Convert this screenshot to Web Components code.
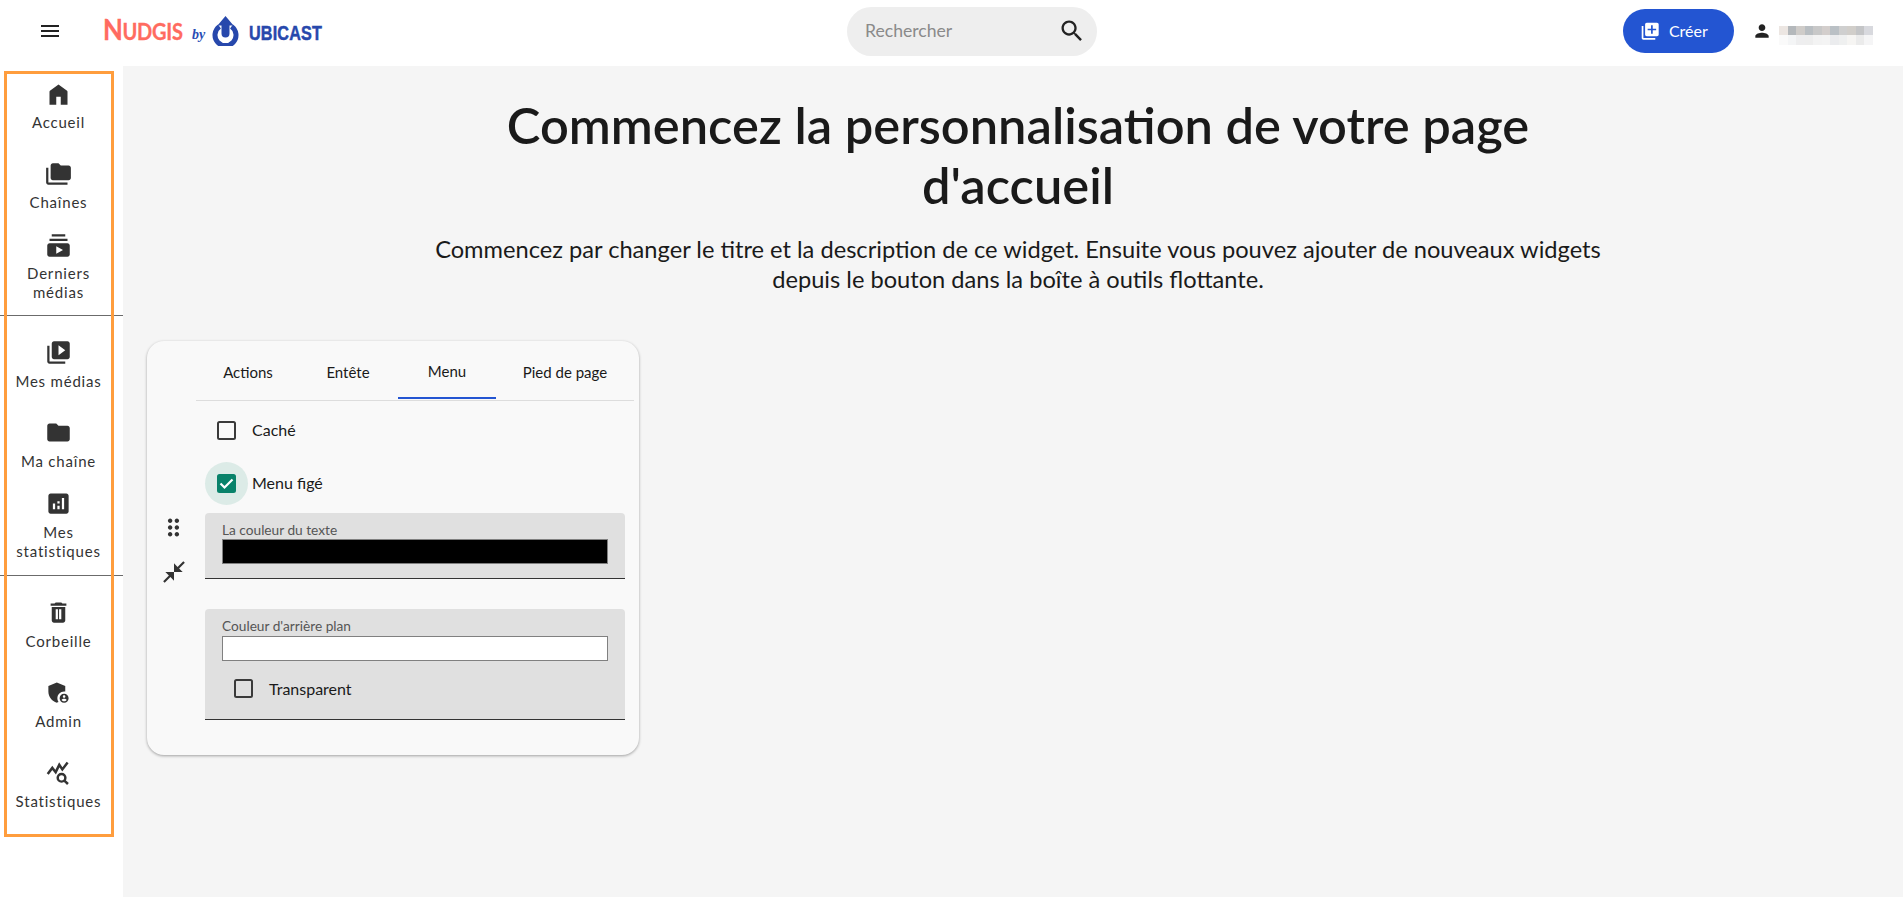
<!DOCTYPE html>
<html lang="fr"><head><meta charset="utf-8"><title>Nudgis</title>
<style>
html,body{margin:0;height:897px;overflow:hidden;background:#fff;font-family:Lato,"Noto Sans",sans-serif;color:#1a1a1a}
app-shell{display:grid}
</style></head>
<body>
<app-shell>
  <app-header slot="header"></app-header>
  <side-nav slot="nav">
    <nav-section pad="6" end="0" lab="5">
      <nav-item icon="home">Accueil</nav-item>
      <nav-item icon="folder_copy">Chaînes</nav-item>
      <nav-item icon="subscriptions" tall>Derniers<br>médias</nav-item>
    </nav-section>
    <nav-section pad="14" end="2" lab="6" rule>
      <nav-item icon="video_library">Mes médias</nav-item>
      <nav-item icon="folder">Ma chaîne</nav-item>
      <nav-item icon="analytics" tall>Mes<br>statistiques</nav-item>
    </nav-section>
    <nav-section pad="14" end="0" lab="6" rule>
      <nav-item icon="delete">Corbeille</nav-item>
      <nav-item icon="admin">Admin</nav-item>
      <nav-item icon="query_stats">Statistiques</nav-item>
    </nav-section>
  </side-nav>
  <page-main slot="main">
    <hero-block slot="hero">
      <span slot="title">Commencez la personnalisation de votre page d'accueil</span>
      <span slot="text">Commencez par changer le titre et la description de ce widget. Ensuite vous pouvez ajouter de nouveaux widgets depuis le bouton dans la boîte à outils flottante.</span>
    </hero-block>
    <settings-card slot="card"></settings-card>
  </page-main>
</app-shell>
<script>
const P={
menu:'M3 18h18v-2H3v2zm0-5h18v-2H3v2zm0-7v2h18V6H3z',
search:'M15.5 14h-.79l-.28-.27C15.41 12.59 16 11.11 16 9.5 16 5.91 13.09 3 9.5 3S3 5.91 3 9.5 5.91 16 9.5 16c1.61 0 3.09-.59 4.23-1.57l.27.28v.79l5 4.99L20.49 19l-4.99-5zm-6 0C7.01 14 5 11.99 5 9.5S7.01 5 9.5 5 14 7.01 14 9.5 11.99 14 9.5 14z',
library_add:'M4 6H2v14c0 1.1.9 2 2 2h14v-2H4V6zm16-4H8c-1.1 0-2 .9-2 2v12c0 1.1.9 2 2 2h12c1.1 0 2-.9 2-2V4c0-1.1-.9-2-2-2zm-1 9h-4v4h-2v-4H9V9h4V5h2v4h4v2z',
person:'M12 12c2.21 0 4-1.79 4-4s-1.79-4-4-4-4 1.79-4 4 1.79 4 4 4zm0 2c-2.67 0-8 1.34-8 4v2h16v-2c0-2.66-5.33-4-8-4z',
home:'M4 21V9.5c0-.3.1-.6.4-.8L12 3l7.6 5.7c.3.2.4.5.4.8V21h-6v-7h-4v7z',
folder_copy:'M3 19h17v2H3c-1.1 0-2-.9-2-2V6h2v13zM23 6v9c0 1.1-.9 2-2 2H7c-1.1 0-2-.9-2-2l.01-11c0-1.1.89-2 1.99-2h5l2 2h7c1.1 0 2 .9 2 2z',
subscriptions:'M20 8H4V6h16v2zm-2-6H6v2h12V2zm4 10v8c0 1.1-.9 2-2 2H4c-1.1 0-2-.9-2-2v-8c0-1.1.9-2 2-2h16c1.1 0 2 .9 2 2zm-6 4-6-3.27v6.53L16 16z',
video_library:'M4 6H2v14c0 1.1.9 2 2 2h14v-2H4V6zm16-4H8c-1.1 0-2 .9-2 2v12c0 1.1.9 2 2 2h12c1.1 0 2-.9 2-2V4c0-1.1-.9-2-2-2zm-8 12.5v-9l6 4.5-6 4.5z',
folder:'M10 4H4c-1.1 0-1.99.9-1.99 2L2 18c0 1.1.9 2 2 2h16c1.1 0 2-.9 2-2V8c0-1.1-.9-2-2-2h-8l-2-2z',
analytics:'M19 3H5c-1.1 0-2 .9-2 2v14c0 1.1.9 2 2 2h14c1.1 0 2-.9 2-2V5c0-1.1-.9-2-2-2zM9 17H7v-5h2v5zm4 0h-2v-3h2v3zm0-5h-2v-2h2v2zm4 5h-2V7h2v10z',
delete:'M6 19c0 1.1.9 2 2 2h8c1.1 0 2-.9 2-2V7H6v12zM9.5 9h2v9h-2zm3 0h2v9h-2zM19 4h-3.5l-1-1h-5l-1 1H5v2h14V4z',
admin:'M17 11c.34 0 .67.04 1 .09V6.27L10.5 3 3 6.27v4.91c0 4.54 3.2 8.79 7.5 9.82.55-.13 1.08-.32 1.6-.55-.69-.98-1.1-2.17-1.1-3.45 0-3.31 2.69-6 6-6zM17 13c-2.21 0-4 1.79-4 4s1.79 4 4 4 4-1.79 4-4-1.79-4-4-4zm0 1.38c.62 0 1.12.51 1.12 1.12s-.51 1.12-1.12 1.12-1.12-.51-1.12-1.12.5-1.12 1.12-1.12zm0 5.37c-.93 0-1.74-.46-2.24-1.17.05-.72 1.51-1.08 2.24-1.08s2.19.36 2.24 1.08c-.5.71-1.31 1.17-2.24 1.17z',
query_stats:'<g fill="none" stroke="currentColor" stroke-width="2.2"><path d="M2.4 13.4L6.5 7.9l3 3.8 3.2-6.5 2.7 4.1 4.7-6.2"/><circle cx="14.7" cy="16.7" r="3.4"/><path d="M17.2 19.2l3.2 3"/></g>',
drag:'M11 18c0 1.1-.9 2-2 2s-2-.9-2-2 .9-2 2-2 2 .9 2 2zm-2-8c-1.1 0-2 .9-2 2s.9 2 2 2 2-.9 2-2-.9-2-2-2zm0-6c-1.1 0-2 .9-2 2s.9 2 2 2 2-.9 2-2-.9-2-2-2zm6 4c1.1 0 2-.9 2-2s-.9-2-2-2-2 .9-2 2 .9 2 2 2zm0 2c-1.1 0-2 .9-2 2s.9 2 2 2 2-.9 2-2-.9-2-2-2zm0 6c-1.1 0-2 .9-2 2s.9 2 2 2 2-.9 2-2-.9-2-2-2z',
compress:'M22 3.41l-5.29 5.29L20 12h-8V4l3.29 3.29L20.59 2 22 3.41zM3.41 22l5.29-5.29L12 20v-8H4l3.29 3.29L2 20.59 3.41 22z'
};
function el(name,css,html){
  customElements.define(name,class extends HTMLElement{
    constructor(){super();this.attachShadow({mode:'open'}).innerHTML=`<style>${css}</style>${html}`;}
  });
}
customElements.define('m-icon',class extends HTMLElement{
  connectedCallback(){
    if(this.shadowRoot)return;
    const s=this.getAttribute('size')||24,d=P[this.getAttribute('name')];
    this.attachShadow({mode:'open'}).innerHTML=`<style>:host{display:block;width:${s}px;height:${s}px;flex:none;color:inherit}svg{display:block;width:100%;height:100%;fill:currentColor}</style><svg viewBox="0 0 24 24">${d[0]==='<'?d:`<path fill-rule="evenodd" d="${d}"/>`}</svg>`;
  }
});
el('app-shell',`:host{display:grid;grid-template-columns:123px 1fr;grid-template-rows:66px 831px;width:1903px;height:897px;position:relative}
 ::slotted([slot=header]){grid-column:1/3}`,`<slot name="header"></slot><slot name="nav"></slot><slot name="main"></slot>`);
el('ubicast-logo',`:host{display:flex;align-items:center;height:62px}
 .n{display:block;width:89px;font:700 29px/1 Lato,sans-serif;color:#ff6b60;letter-spacing:-.5px;transform:scaleX(.89);transform-origin:0 50%;white-space:nowrap;margin-bottom:4px;-webkit-text-stroke:.3px #ff6b60}
 .n small{font-size:22.5px;letter-spacing:-.3px}
 .by{font:italic 700 14px/1 "Liberation Serif",serif;color:#2a4db5;margin:7px 0 0 0;width:20px}
 svg{display:block;width:27px;height:30px;margin-right:10px}
 .u{font:700 21px/1 "Liberation Sans",sans-serif;color:#2748ac;display:inline-block;transform:scaleX(.77);transform-origin:0 50%;letter-spacing:.2px;margin-top:3px;-webkit-text-stroke:.5px #2748ac}`,
 `<span class="n">N<small>UDGIS</small></span><span class="by">by</span>
  <svg viewBox="0 0 27 30"><path d="M7.5 10.5a10.5 10.5 0 1 0 12 0" fill="none" stroke="#2748ac" stroke-width="5"/><path d="M13.5 0l8 9.5H17.5v8a4 4 0 0 1-8 0v-8H5.5z" fill="#2748ac"/></svg>
  <span class="u">UBICAST</span>`);
el('search-box',`:host{display:flex;align-items:center;justify-content:space-between;width:250px;height:49px;background:#eee;border-radius:25px;padding:0 11px 0 18px;box-sizing:border-box;color:#8a8a8a;font:17.6px/1 Lato,sans-serif}
 m-icon{color:#222}`,`<span>Rechercher</span><m-icon name="search" size="28"></m-icon>`);
el('create-button',`:host{display:flex;align-items:center;gap:8.6px;width:111px;height:44px;box-sizing:border-box;padding-left:17px;border-radius:22px;background:#2355d2;color:#fff;font:16px/1 Lato,sans-serif}`,
 `<m-icon name="library_add" size="20.4"></m-icon><span><slot></slot></span>`);
el('blur-name',`:host{display:grid;grid-template-columns:repeat(11,8.55px);grid-template-rows:9px 10px;width:94px;margin-top:9px}`,
 ['#ece6e2','#b4b8bb','#cfccc9','#b9bec2','#c8c8c8','#d3cecc','#bac0c5','#cfcfcf','#d1ceca','#c4c5c7','#d8d9de','#fafafa','#f4f5f6','#eeeeef','#eeeeee','#f3f3f3','#f4f4f4','#ebecee','#eff0f0','#f6f5f3','#ebebeb','#f5f5f6'].map(c=>`<i style="background:${c}"></i>`).join(''));
el('app-header',`:host{display:grid;grid-template-columns:103px 744px 250px 776px;align-items:center;height:66px;padding-bottom:4px;box-sizing:border-box;background:#fff}
 .r{display:flex;align-items:center;justify-content:flex-end;gap:17.5px}
 .hamb{padding-left:37.5px;color:#222}
 .u{display:flex;align-items:center;gap:7.5px;color:#222}`,
 `<div class="hamb"><m-icon name="menu" size="24"></m-icon></div>
  <div class="l"><ubicast-logo></ubicast-logo></div>
  <div class="s"><search-box></search-box></div>
  <div class="r"><create-button>Créer</create-button><div class="u"><m-icon name="person" size="20"></m-icon><blur-name></blur-name></div></div>`);
el('side-nav',`:host{display:block;position:relative;width:123px;background:#fff}
 .o{position:absolute;left:4px;top:5px;width:110px;height:766px;box-sizing:border-box;border:3px solid #ff9d3d;pointer-events:none}`,
 `<slot></slot><div class="o"></div>`);
customElements.define('nav-section',class extends HTMLElement{
  constructor(){super();this.attachShadow({mode:'open'}).innerHTML=`<style>:host{display:flex;flex-direction:column;padding-right:6px}:host([rule]){border-top:1px solid #6b6b6b}</style><slot></slot>`;}
  connectedCallback(){this.style.paddingTop=this.getAttribute('pad')+'px';this.style.paddingBottom=this.getAttribute('end')+'px';this.style.setProperty('--lab',this.getAttribute('lab')+'px')}
});
customElements.define('nav-item',class extends HTMLElement{
  constructor(){super();this.attachShadow({mode:'open'})}
  connectedCallback(){
    if(this.shadowRoot.innerHTML)return;
    this.shadowRoot.innerHTML=`<style>:host{display:flex;flex-direction:column;align-items:center;box-sizing:border-box;height:80px;padding-top:9px;color:#333;font:15px/19px Lato,sans-serif;letter-spacing:.8px;text-align:center}
    :host([tall]){height:83px;padding-top:0}
    .t{margin-top:var(--lab)}</style><m-icon name="${this.getAttribute('icon')}" size="27"></m-icon><div class="t"><slot></slot></div>`;
  }
});
el('page-main',`:host{display:block;background:#f5f5f5;padding:29px 0 0 24px;box-sizing:border-box;height:831px}`,`<slot name="hero"></slot><slot name="card"></slot>`);
el('hero-block',`:host{display:block;width:1742px;text-align:center;color:#1a1a1a}
 h1{margin:0 auto;width:1060px;font:600 50.6px/60px Lato,sans-serif}
 p{margin:19px auto 47px;width:1200px;font:400 23.65px/30px Lato,sans-serif}`,
 `<h1><slot name="title"></slot></h1><p><slot name="text"></slot></p>`);
customElements.define('check-row',class extends HTMLElement{
  constructor(){super();this.attachShadow({mode:'open'})}
  connectedCallback(){
    if(this.shadowRoot.innerHTML)return;
    const on=this.hasAttribute('checked');
    this.shadowRoot.innerHTML=`<style>:host{display:flex;align-items:center;height:43px;font:16px/1 Lato,sans-serif;color:#1a1a1a}
    .h{width:43px;height:43px;border-radius:50%;display:flex;align-items:center;justify-content:center;flex:none;margin-right:4px;background:${on?'#dcebe7':'transparent'}}
    .b{width:19px;height:19px;box-sizing:border-box;border-radius:2.5px;border:2px solid #3a3a3a;${on?'background:#08826a;border-color:#08826a;':''}display:block}
    svg{display:block;width:15px;height:15px;fill:none;stroke:#fff;stroke-width:2.2}
    .x{margin-bottom:var(--lb,1px)}
    </style><div class="h"><div class="b">${on?'<svg viewBox="0 0 15 15"><path d="M1.5 7.5l4 4 8-8"/></svg>':''}</div></div><div class="x"><slot></slot></div>`;
  }
});
customElements.define('color-field',class extends HTMLElement{
  constructor(){super();this.attachShadow({mode:'open'})}
  connectedCallback(){
    if(this.shadowRoot.innerHTML)return;
    this.shadowRoot.innerHTML=`<style>:host{display:block;background:#e0e0e0;border-radius:4px 4px 0 0;border-bottom:1px solid #333;padding:9px 17px 0;box-sizing:border-box;color:#555}
    .l{font:13.7px/15px Lato,sans-serif;color:#555;height:var(--lh,17px)}
    .c{height:25px;box-sizing:border-box;border:1px solid #808080;background:${this.getAttribute('color')}}
    ::slotted(check-row){margin:6px 0 0 0}</style><div class="l">${this.getAttribute('label')}</div><div class="c"></div><slot></slot>`;
  }
});
el('settings-card',`:host{display:grid;grid-template-columns:49px 1fr;width:492px;height:414px;box-sizing:border-box;background:#f9f9f9;border-radius:17px;box-shadow:0 1px 3px rgba(0,0,0,.35)}
 .h{display:flex;flex-direction:column;align-items:center;justify-content:center;gap:18px;color:#333;padding:3px 0 0 4px}
 .r{padding-right:5px}
 .tabs{display:grid;grid-template-columns:100px 100px 98px 138px;padding-left:2px;height:59px;border-bottom:1px solid #ddd;font:15px/1 Lato,sans-serif;color:#1a1a1a}
 .tabs div{display:flex;align-items:center;justify-content:center;padding-top:4px;box-sizing:border-box}
 .tabs .a{border-bottom:2px solid #2355d2;margin-bottom:1px}
 .f{padding:8px 9px 0 9px}
 .gap{height:10px}.g2{height:8px}.g3{height:30px}
 `,`<div class="h"><m-icon name="drag" size="27"></m-icon><m-icon name="compress" size="26"></m-icon></div>
 <div class="r"><div class="tabs"><div>Actions</div><div>Entête</div><div class="a">Menu</div><div>Pied de page</div></div>
 <div class="f"><check-row>Caché</check-row><div class="gap"></div><check-row checked>Menu figé</check-row><div class="g2"></div>
 <color-field label="La couleur du texte" color="#000" style="height:66px"></color-field><div class="g3"></div>
 <color-field label="Couleur d'arrière plan" color="#fff" style="height:111px;--lh:18px"><check-row style="--lb:0px">Transparent</check-row></color-field></div></div>`);
</script>
</body></html>
